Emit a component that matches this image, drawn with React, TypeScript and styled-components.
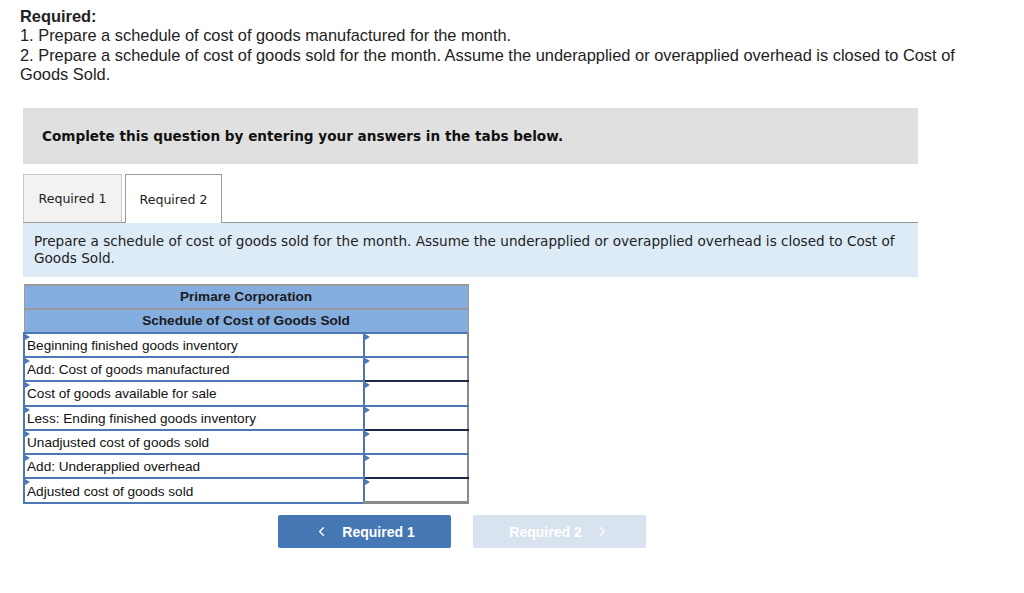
import React from "react";
import styled, { createGlobalStyle } from "styled-components";
import { ChevronLeft, ChevronRight } from "lucide-react";

const GlobalStyle = createGlobalStyle`
  body {
    margin: 0;
    background: #ffffff;
    font-family: "Liberation Sans", Arial, sans-serif;
    color: #1a1a1a;
  }
`;

const Page = styled.div`
  padding: 7px 0 0 20px;
  width: 1004px;
`;

const Intro = styled.div`
  font-family: "Liberation Sans", Arial, sans-serif;
  font-size: 16.4px;
  line-height: 19.4px;
  color: #222;
  width: 975px;
`;

const Strong = styled.div`
  font-weight: bold;
`;

const Question = styled.div`
  margin: 23px 0 0 3px;
  width: 895px;
`;

const Banner = styled.div`
  height: 56px;
  background: #e0e0e0;
  display: flex;
  align-items: center;
  padding-left: 19px;
  font-family: "DejaVu Sans", Verdana, sans-serif;
  font-weight: bold;
  font-size: 13.6px;
  color: #111;
`;

const TabRow = styled.div`
  display: flex;
  align-items: flex-end;
  margin-top: 9px;
  gap: 3px;
  border-bottom: 1px solid #9a9a9a;
  height: 49px;
`;

const Tab = styled.div<{ $active?: boolean }>`
  height: ${(p) => (p.$active ? "49px" : "48px")};
  box-sizing: border-box;
  width: ${(p) => (p.$active ? "97px" : "99px")};
  display: flex;
  align-items: center;
  justify-content: center;
  font-family: "DejaVu Sans", Verdana, sans-serif;
  font-size: 12.6px;
  color: #222;
  background: ${(p) => (p.$active ? "#ffffff" : "#f2f2f2")};
  border: 1px solid ${(p) => (p.$active ? "#9a9a9a" : "#c8c8c8")};
  border-bottom: none;
  margin-bottom: ${(p) => (p.$active ? "-1px" : "0")};
  padding-top: ${(p) => (p.$active ? "1px" : "0")};
`;

const Info = styled.div`
  background: #ddebf7;
  padding: 10px 10px 10px 11px;
  font-family: "DejaVu Sans", Verdana, sans-serif;
  font-size: 13.6px;
  line-height: 17px;
  color: #222;
`;

const Schedule = styled.table`
  margin-top: 7px;
  width: 446px;
  border-collapse: collapse;
  font-family: "Liberation Sans", Arial, sans-serif;
  font-size: 13.6px;
  color: #111;
`;

const HeadRow = styled.tr`
  height: 24px;
`;

const BodyRow = styled.tr`
  height: 24.3px;
`;

const HeadCell = styled.th`
  padding: 0;
  background: #84ade0;
  border: 1px solid #9a9a9a;
  border-top-width: 2px;
  font-weight: bold;
  text-align: center;
  color: #1a1a1a;
`;

const marker = `
  &::before {
    content: "";
    position: absolute;
    left: 0;
    top: 0;
    border-left: 5px solid #4d77b7;
    border-top: 3px solid transparent;
    border-bottom: 3px solid transparent;
  }
`;

const LabelCell = styled.td`
  position: relative;
  padding: 1px 0 0 2px;
  width: 336px;
  border: 2px solid #4d77b7;
  background: #fff;
  white-space: nowrap;
  ${marker}
`;

const AmountCell = styled.td<{ $rule?: "single" | "double" }>`
  position: relative;
  padding: 0;
  border: 2px solid #4d77b7;
  border-right: 2px solid #8a8a8a;
  border-bottom-color: ${(p) =>
    p.$rule === "single" ? "#1c2a44" : p.$rule === "double" ? "#8a8a8a" : "#4d77b7"};
  border-bottom-width: ${(p) => (p.$rule === "double" ? "3px" : "2px")};
  background: #fff;
  ${marker}
`;

const Nav = styled.div`
  display: flex;
  gap: 22px;
  margin-top: 11px;
  padding-left: 258px;
`;

const NavButton = styled.button<{ $disabled?: boolean }>`
  width: 173px;
  height: 33px;
  border: none;
  border-radius: 2px;
  background: ${(p) => (p.$disabled ? "#d9e3ef" : "#4677b5")};
  color: #ffffff;
  font-family: "Liberation Sans", Arial, sans-serif;
  font-weight: bold;
  font-size: 14px;
  display: flex;
  align-items: center;
  justify-content: center;
  gap: 13px;
  cursor: pointer;
`;

type Row = { label: string; rule?: "single" | "double" };

const rows: Row[] = [
  { label: "Beginning finished goods inventory" },
  { label: "Add: Cost of goods manufactured", rule: "single" },
  { label: "Cost of goods available for sale" },
  { label: "Less: Ending finished goods inventory", rule: "single" },
  { label: "Unadjusted cost of goods sold" },
  { label: "Add: Underapplied overhead", rule: "single" },
  { label: "Adjusted cost of goods sold", rule: "double" },
];

export default function App() {
  return (
    <Page>
      <GlobalStyle />
      <Intro>
        <Strong>Required:</Strong>
        <div>1. Prepare a schedule of cost of goods manufactured for the month.</div>
        <div>
          2. Prepare a schedule of cost of goods sold for the month. Assume the underapplied or
          overapplied overhead is closed to Cost of Goods Sold.
        </div>
      </Intro>

      <Question>
        <Banner>Complete this question by entering your answers in the tabs below.</Banner>
        <TabRow>
          <Tab>Required 1</Tab>
          <Tab $active>Required 2</Tab>
        </TabRow>
        <Info>
          Prepare a schedule of cost of goods sold for the month. Assume the underapplied or
          overapplied overhead is closed to Cost of Goods Sold.
        </Info>

        <Schedule>
          <thead>
            <HeadRow>
              <HeadCell colSpan={2}>Primare Corporation</HeadCell>
            </HeadRow>
            <HeadRow>
              <HeadCell colSpan={2}>Schedule of Cost of Goods Sold</HeadCell>
            </HeadRow>
          </thead>
          <tbody>
            {rows.map((r) => (
              <BodyRow key={r.label}>
                <LabelCell>{r.label}</LabelCell>
                <AmountCell $rule={r.rule} />
              </BodyRow>
            ))}
          </tbody>
        </Schedule>
      </Question>

      <Nav>
        <NavButton>
          <ChevronLeft size={15} strokeWidth={2.2} />
          Required 1
        </NavButton>
        <NavButton $disabled>
          Required 2
          <ChevronRight size={15} strokeWidth={2.2} />
        </NavButton>
      </Nav>
    </Page>
  );
}
